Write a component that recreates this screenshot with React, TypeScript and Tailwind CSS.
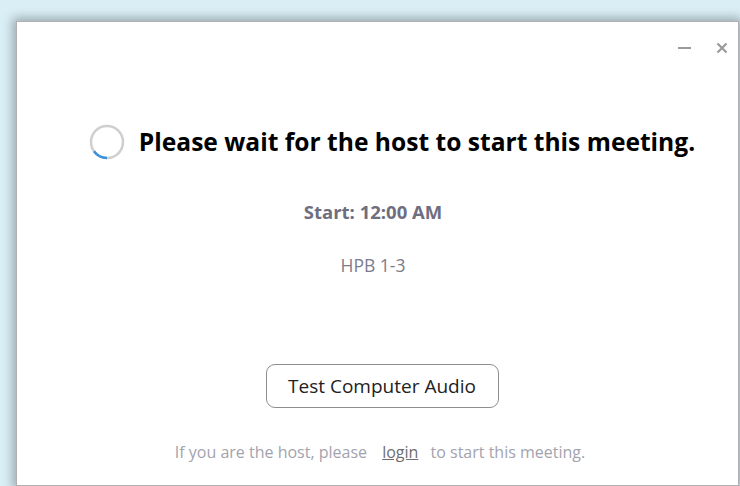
export default function App() {
  return (
    <div className="w-[740px] h-[486px] overflow-hidden bg-[#d9eef5] pt-[21px] pl-[16px]" style={{ fontFamily: '"Open Sans", "Noto Sans", sans-serif' }}>
      <div className="relative w-[723px] h-[465px] bg-white border border-[#b0b0b0] shadow-[0_0_10px_3px_rgba(0,0,0,0.3)] flex flex-col items-center">
        {/* window controls */}
        <div className="absolute top-[20px] right-[10px] flex items-center gap-[25px]">
          <div className="w-[13px] h-[2px] bg-[#9a9a9a]" />
          <svg width="12" height="12" viewBox="0 0 12 12">
            <path d="M1.5 1.5 L10.5 10.5 M10.5 1.5 L1.5 10.5" stroke="#9a9a9a" strokeWidth="2.2" />
          </svg>
        </div>

        <div className="mt-[102px] ml-[29px] flex items-center gap-[14px]">
          <svg width="36" height="36" viewBox="0 0 36 36">
            <circle cx="18" cy="18" r="16" fill="none" stroke="#cfcfcf" strokeWidth="2.5" />
            <path d="M18 34 A16 16 0 0 1 5 27.3" fill="none" stroke="#3a92dd" strokeWidth="2.5" />
          </svg>
          <h1 className="text-[24.6px] leading-[34px] font-bold text-black">Please wait for the host to start this meeting.</h1>
        </div>

        <div className="mt-[40px] ml-[-9px] text-[18.5px] leading-[24px] font-bold text-[#6e6e80]">Start: 12:00 AM</div>
        <div className="mt-[29px] ml-[-9px] text-[17.5px] leading-[24px] text-[#7c7c8c]">HPB 1-3</div>

        <button className="mt-[87px] ml-[9px] w-[233px] h-[44px] rounded-[9px] border border-[#8e8e8e] bg-white text-[19px] text-[#222]">
          Test Computer Audio
        </button>

        <div className="mt-[33px] ml-[5px] text-[16px] leading-[22px] text-[#a3a3ad]">
          If you are the host, please <span className="ml-[11px] mr-[8px] underline text-[#6e6e6e]">login</span> to start this meeting.
        </div>
      </div>
    </div>
  );
}
